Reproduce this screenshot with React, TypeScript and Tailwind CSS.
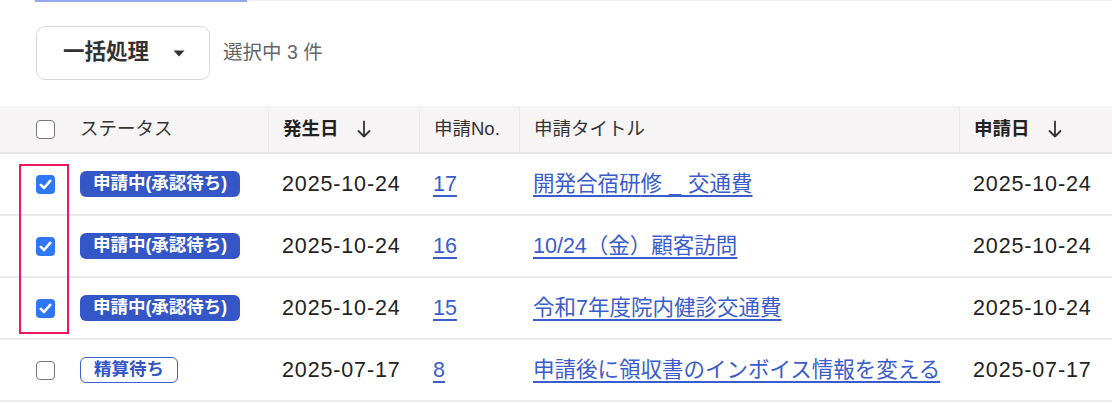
import React from "react";

const font = "font-['Liberation_Sans','Noto_Sans_CJK_JP',sans-serif]";

function Checkbox({ checked }: { checked: boolean }) {
  if (checked) {
    return (
      <div className="w-[19px] h-[19px] rounded-[4px] bg-[#2f78f5] flex items-center justify-center">
        <svg width="13" height="11" viewBox="0 0 13 11">
          <path d="M1.8 5.8 L5 9 L11.2 1.8" fill="none" stroke="#fff" strokeWidth="2.6" strokeLinecap="round" strokeLinejoin="round" />
        </svg>
      </div>
    );
  }
  return <div className="w-[19px] h-[19px] rounded-[4px] border-[1.5px] border-[#767676] bg-white" />;
}

function SortArrow() {
  return (
    <svg width="14" height="18" viewBox="0 0 14 18" className="ml-[18px]">
      <path d="M7 1.5 V16.5 M1.5 11 L7 16.5 L12.5 11" fill="none" stroke="#333" strokeWidth="1.8" strokeLinecap="round" strokeLinejoin="round" />
    </svg>
  );
}

function Badge({ label, filled }: { label: string; filled: boolean }) {
  return filled ? (
    <span className="inline-flex items-center h-[26px] px-[13px] rounded-[6px] bg-[#3556c6] text-white text-[17.5px] font-bold leading-none">
      {label}
    </span>
  ) : (
    <span className="inline-flex items-center h-[26px] px-[13px] rounded-[6px] border-[1.5px] border-[#3d5fd0] bg-white text-[#3556c6] text-[17.5px] font-bold leading-none">
      {label}
    </span>
  );
}

const rows = [
  { checked: true, status: "申請中(承認待ち)", filled: true, date: "2025-10-24", no: "17", title: ["開発合宿研", "修_", "交通費"], applied: "2025-10-24" },
  { checked: true, status: "申請中(承認待ち)", filled: true, date: "2025-10-24", no: "16", title: ["10/24（金）顧客訪問"], applied: "2025-10-24" },
  { checked: true, status: "申請中(承認待ち)", filled: true, date: "2025-10-24", no: "15", title: ["令和7年度院内健診交通費"], applied: "2025-10-24" },
  { checked: false, status: "精算待ち", filled: false, date: "2025-07-17", no: "8", title: ["申請後に領収書のインボイス情報を変える"], applied: "2025-07-17" },
];

const grid = "grid grid-cols-[66px_202px_151px_100px_440px_1fr]";

export default function App() {
  return (
    <div className={`w-[1112px] h-[404px] bg-white overflow-hidden text-[#222] ${font}`}>
      <div className="flex h-[2px]">
        <div className="w-[35px]" />
        <div className="w-[212px] bg-[#93a6ee]" />
        <div className="flex-1 border-t border-[#ececec]" />
      </div>

      <div className="flex items-center pl-[36px] pt-[24px]">
        <button className="flex items-center justify-between w-[174px] h-[54px] pl-[26px] pr-[24px] rounded-[9px] border-[1.5px] border-[#d9d9d9] bg-white">
          <span className="text-[21.5px] font-bold text-[#333] leading-none">一括処理</span>
          <svg width="12" height="7" viewBox="0 0 12 7">
            <path d="M0.5 0.5 H11.5 L6 6.5 Z" fill="#333" />
          </svg>
        </button>
        <span className="ml-[13px] text-[19.5px] text-[#666]">選択中 3 件</span>
      </div>

      <div className="relative mt-[26px]">
        <div className={`${grid} h-[48px] bg-[#f6f4f5] border-b-2 border-[#e6e6e6] text-[18.5px] text-[#333] items-stretch`}>
          <div className="flex items-center pl-[36px]">
            <Checkbox checked={false} />
          </div>
          <div className="flex items-center pl-[14px]">ステータス</div>
          <div className="flex items-center pl-[14px] border-l border-[#ebe9ea] font-bold text-[#222]">
            発生日
            <SortArrow />
          </div>
          <div className="flex items-center pl-[14px] border-l border-[#ebe9ea]">申請No.</div>
          <div className="flex items-center pl-[14px] border-l border-[#ebe9ea]">申請タイトル</div>
          <div className="flex items-center pl-[14px] border-l border-[#ebe9ea] font-bold text-[#222]">
            申請日
            <SortArrow />
          </div>
        </div>

        {rows.map((r, i) => (
          <div key={i} className={`${grid} h-[62px] border-b-2 border-[#ebebeb] items-center text-[21.5px]`}>
            <div className="pl-[36px] flex items-center">
              <Checkbox checked={r.checked} />
            </div>
            <div className="pl-[14px] flex items-center">
              <Badge label={r.status} filled={r.filled} />
            </div>
            <div className="pl-[14px] tracking-[0.04em]">{r.date}</div>
            <div className="pl-[14px]">
              <a className="text-[#3b5ccc] underline underline-offset-[4px] decoration-[1.5px]">{r.no}</a>
            </div>
            <div className="pl-[14px] whitespace-nowrap">
              <a className="text-[#3b5ccc] underline underline-offset-[4px] decoration-[1.5px]">
                {r.title.map((t, j) =>
                  t === "修_" ? (
                    <span key={j} className="tracking-[7px]">{t}</span>
                  ) : (
                    <React.Fragment key={j}>{t}</React.Fragment>
                  )
                )}
              </a>
            </div>
            <div className="pl-[14px] tracking-[0.04em]">{r.applied}</div>
          </div>
        ))}

        <div className="absolute left-[19px] top-[58px] w-[50px] h-[170px] border-2 border-[#ec1a5c]" />
      </div>
    </div>
  );
}
